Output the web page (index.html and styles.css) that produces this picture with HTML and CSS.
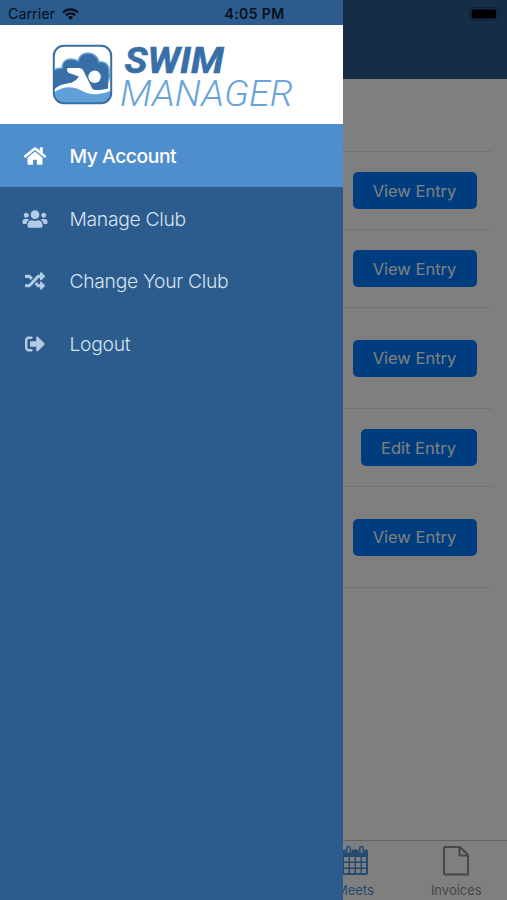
FILE: index.html
```html
<!DOCTYPE html>
<html lang="en">
<head>
  <meta charset="UTF-8" />
  <title>Swim Manager</title>
  <meta name="viewport" content="width=device-width, initial-scale=1.0" />
  <link rel="stylesheet" href="styles.css">
</head>
<body>

  <div class="page">
    <header class="navbar"></header>

    <main class="entries">
      <div class="entry entry-head"></div>
      <div class="entry"><button class="btn">View Entry</button></div>
      <div class="entry"><button class="btn">View Entry</button></div>
      <div class="entry entry-tall"><button class="btn">View Entry</button></div>
      <div class="entry"><button class="btn btn-edit">Edit Entry</button></div>
      <div class="entry entry-tall"><button class="btn">View Entry</button></div>
    </main>

    <nav class="tabbar">
      <a class="tab active">
        <svg viewBox="0 0 28 32">
          <path fill="currentColor" fill-rule="evenodd" d="M3 4.500h1.500V7a3.500 3.500 0 0 0 6 0V4.500h7V7a3.500 3.500 0 0 0 6 0V4.500H25a2 2 0 0 1 2 2V28a2 2 0 0 1-2 2H3a2 2 0 0 1-2-2V6.500a2 2 0 0 1 2-2zM3 12v4.500h4.500V12zM9 12v4.500h4.500V12zM15 12v4.500h4.500V12zM21 12v4.500h4V12zM3 18v4.500h4.500V18zM9 18v4.500h4.500V18zM15 18v4.500h4.500V18zM21 18v4.500h4V18zM3 24v4h4.500v-4zM9 24v4h4.500v-4zM15 24v4h4.500v-4zM21 24v4h4v-4z"/>
          <path fill="none" stroke="currentColor" stroke-width="1.500" d="M5.800 3.200a1.700 1.700 0 0 1 3.400 0V7a1.700 1.700 0 0 1-3.400 0zM18.800 3.200a1.700 1.700 0 0 1 3.400 0V7a1.700 1.700 0 0 1-3.400 0z"/>
        </svg>
        <span>Meets</span>
      </a>
      <a class="tab">
        <svg viewBox="0 0 28 32">
          <path fill="none" stroke="currentColor" stroke-width="2" stroke-linejoin="round" d="M3.500 2H18l8 8v19.500H3a1 1 0 0 1-1-1V3a1 1 0 0 1 1-1zM17.500 2v8.500H26"/>
        </svg>
        <span>Invoices</span>
      </a>
    </nav>
  </div>

  <div class="overlay"></div>

  <aside class="drawer">
    <div class="logo">
      <svg viewBox="0 0 343 99">
        <defs>
          <clipPath id="badge"><rect x="54" y="21" width="57" height="57" rx="9"/></clipPath>
        </defs>
        <g clip-path="url(#badge)">
          <path class="logo-cloud" d="M52 47c2-3 6-4 10-4 0-6 4-9 9-9q4 0 7 2c1-5 5-8 10-8 6 0 10 4 11 9 7-1 11 4 10 10 1 4 0 8-1 11v12H52z"/>
          <path class="logo-rim" d="M52 47c2-3 6-4 10-4 0-6 4-9 9-9q4 0 7 2c1-5 5-8 10-8 6 0 10 4 11 9 7-1 11 4 10 10 1 4 0 8-1 11"/>
          <path class="logo-white" d="M52 67c3-4 7-7 13-8l7-1.500q4-1.500 7-6L69 48q-3-2-1.500-5H79q2.500 0 4 2l9.500 19c3 2 10 1 19-1.500V72H52z"/>
          <circle class="logo-white" cx="94.600" cy="51.800" r="6.200"/>
          <path class="logo-wave" d="M52 69c10-8 20-8 28-4 11 6 20 5 33 0v15H52z"/>
        </g>
        <rect class="logo-frame" x="53.800" y="20.800" width="57.400" height="57.400" rx="10"/>
        <text class="logo-swim" x="124.500" y="47.500" textLength="99" lengthAdjust="spacingAndGlyphs">SWIM</text>
        <text class="logo-manager" x="120" y="80.500" textLength="173" lengthAdjust="spacingAndGlyphs">MANAGER</text>
      </svg>
    </div>

    <nav class="menu">
      <a class="menu-item active">
        <svg viewBox="0 0 576 512"><path d="M280.370 148.260L96 300.110V464a16 16 0 0 0 16 16l112.060-.290a16 16 0 0 0 15.920-16V368a16 16 0 0 1 16-16h64a16 16 0 0 1 16 16v95.640a16 16 0 0 0 16 16.050L464 480a16 16 0 0 0 16-16V300L295.670 148.260a12.190 12.190 0 0 0-15.300 0zM571.600 251.470L488 182.560V44.050a12 12 0 0 0-12-12h-56a12 12 0 0 0-12 12v72.610L318.470 43a48 48 0 0 0-61 0L4.340 251.470a12 12 0 0 0-1.600 16.900l25.500 31A12 12 0 0 0 45.150 301l235.220-193.740a12.190 12.190 0 0 1 15.300 0L530.900 301a12 12 0 0 0 16.900-1.600l25.500-31a12 12 0 0 0-1.700-16.930z"/></svg>
        <span>My Account</span>
      </a>
      <a class="menu-item">
        <svg viewBox="0 0 640 512"><path d="M96 224c35.300 0 64-28.700 64-64s-28.700-64-64-64-64 28.700-64 64 28.700 64 64 64zm448 0c35.300 0 64-28.700 64-64s-28.700-64-64-64-64 28.700-64 64 28.700 64 64 64zm32 32h-64c-17.600 0-33.500 7.100-45.100 18.600 40.300 22.100 68.900 62 75.100 109.400h66c17.700 0 32-14.300 32-32v-32c0-35.300-28.700-64-64-64zm-256 0c61.900 0 112-50.100 112-112S381.900 32 320 32 208 82.100 208 144s50.100 112 112 112zm76.800 32h-8.300c-20.800 10-43.900 16-68.500 16s-47.600-6-68.500-16h-8.300C179.600 288 128 339.600 128 403.200V432c0 26.500 21.500 48 48 48h288c26.500 0 48-21.500 48-48v-28.800c0-63.600-51.600-115.200-115.200-115.200zm-223.700-13.400C161.500 263.100 145.600 256 128 256H64c-35.300 0-64 28.700-64 64v32c0 17.700 14.300 32 32 32h65.900c6.300-47.400 34.900-87.300 75.200-109.400z"/></svg>
        <span>Manage Club</span>
      </a>
      <a class="menu-item">
        <svg viewBox="0 0 512 512"><path d="M504.971 359.029c9.373 9.373 9.373 24.569 0 33.941l-80 79.984c-15.010 15.010-40.971 4.490-40.971-16.971V416h-58.785a12.004 12.004 0 0 1-8.773-3.812l-70.556-75.596 53.333-57.143L352 336h32v-39.981c0-21.438 25.943-31.998 40.971-16.971l80 79.981zM12 176h84l52.781 56.551 53.333-57.143-70.556-75.596A11.999 11.999 0 0 0 122.785 96H12c-6.627 0-12 5.373-12 12v56c0 6.627 5.373 12 12 12zm372 0v39.984c0 21.460 25.961 31.980 40.971 16.971l80-79.984c9.373-9.373 9.373-24.569 0-33.941l-80-79.981C409.943 24.021 384 34.582 384 56.019V96h-58.785a12.004 12.004 0 0 0-8.773 3.812L96 336H12c-6.627 0-12 5.373-12 12v56c0 6.627 5.373 12 12 12h110.785c3.326 0 6.503-1.381 8.773-3.812L352 176h32z"/></svg>
        <span>Change Your Club</span>
      </a>
      <a class="menu-item">
        <svg viewBox="0 0 512 512"><path d="M497 273L329 441c-15 15-41 4.500-41-17v-96H152c-13.300 0-24-10.700-24-24v-96c0-13.300 10.700-24 24-24h136V88c0-21.400 25.900-32 41-17l168 168c9.300 9.400 9.300 24.600 0 34zM192 436v-40c0-6.600-5.400-12-12-12H96c-17.700 0-32-14.300-32-32V160c0-17.700 14.300-32 32-32h84c6.600 0 12-5.400 12-12V76c0-6.600-5.400-12-12-12H96c-53 0-96 43-96 96v192c0 53 43 96 96 96h84c6.600 0 12-5.400 12-12z"/></svg>
        <span>Logout</span>
      </a>
    </nav>
  </aside>

  <div class="statusbar">
    <div class="carrier">
      <span>Carrier</span>
      <svg viewBox="0 0 17 12">
        <g fill="none" stroke="currentColor" stroke-width="2.300">
          <path d="M1 4.500a10.700 10.700 0 0 1 15 0"/>
          <path d="M3.800 7.400a6.700 6.700 0 0 1 9.400 0"/>
        </g>
        <path fill="currentColor" d="M8.500 12L5.800 9.300a3.800 3.800 0 0 1 5.400 0z"/>
      </svg>
    </div>
    <div class="time">4:05 PM</div>
    <div class="battery">
      <svg viewBox="0 0 32 14">
        <rect x=".5" y=".5" width="28" height="12.500" rx="3.500" fill="none" stroke="#0f2033"/>
        <rect x="2.500" y="2.500" width="24.500" height="8.800" rx="1.500" fill="#000"/>
        <path d="M30 4.500q2 2.200 0 4.500z" fill="#0f2033"/>
      </svg>
    </div>
  </div>

</body>
</html>
```

FILE: styles.css
```css
* {
  box-sizing: border-box;
}

body {
  margin: 0;
  height: 900px;
  overflow: hidden;
  position: relative;
  font-family: Inter, 'Liberation Sans', sans-serif;
  background: #fff;
}

.page {
  height: 900px;
  display: flex;
  flex-direction: column;
}

.navbar {
  height: 79px;
  background: #2c5a8c;
}

.entries {
  flex: 1;
  padding: 0 15px;
}

.entry {
  height: 78px;
  padding-right: 15.5px;
  border-bottom: 1px solid #e6e9ec;
  display: flex;
  align-items: center;
  justify-content: flex-end;
}

.entry-head {
  height: 73px;
}

.entry-tall {
  height: 101px;
}

.btn {
  width: 124px;
  height: 37px;
  padding: 0;
  border: none;
  border-radius: 5px;
  background: #007bff;
  color: #fff;
  font-family: inherit;
  font-size: 16.5px;
}

.btn-edit {
  width: 116px;
}

.tabbar {
  height: 60px;
  border-top: 1px solid #c4c4c4;
  display: flex;
  justify-content: flex-end;
}

.tab {
  width: 101.4px;
  padding-top: 4px;
  display: flex;
  flex-direction: column;
  align-items: center;
  gap: 4px;
  color: #8e8e93;
  font-size: 13px;
  line-height: 18px;
}

.tab.active {
  color: #4a94e0;
}

.tab svg {
  width: 28px;
  height: 32px;
}

.overlay {
  position: absolute;
  inset: 0;
  background: rgba(0, 0, 0, 0.5);
}

.drawer {
  position: absolute;
  top: 0;
  left: 0;
  width: 343px;
  height: 900px;
  padding-top: 25px;
  background: #2c5b8d;
}

.logo {
  height: 99px;
  background: #fff;
}

.logo svg {
  display: block;
  width: 343px;
  height: 99px;
}

.logo-cloud {
  fill: #376fa6;
}

.logo-rim {
  fill: none;
  stroke: #73a7d8;
  stroke-width: 1.5;
}

.logo-white {
  fill: #fff;
}

.logo-wave {
  fill: #609fd7;
}

.logo-frame {
  fill: none;
  stroke: #376fa6;
  stroke-width: 2;
}

.logo-swim {
  font: italic 700 37px Roboto, sans-serif;
  fill: #376fa6;
  stroke: #376fa6;
  stroke-width: 0.6;
}

.logo-manager {
  font: italic 300 37px Roboto, sans-serif;
  fill: #68a4da;
}

.menu-item {
  height: 62.7px;
  padding: 1px 0 0 22px;
  display: flex;
  align-items: center;
  gap: 21.5px;
  color: #d5e2f0;
  font-size: 19.3px;
  font-weight: 300;
  letter-spacing: -0.3px;
}

.menu-item svg {
  width: 26px;
  height: 20px;
  fill: #b3cbe4;
}

.menu-item.active {
  background: #4f8ecd;
  color: #fff;
  font-weight: 500;
  letter-spacing: -0.45px;
}

.menu-item.active svg {
  fill: #fff;
}

.statusbar {
  position: absolute;
  top: 0;
  left: 0;
  width: 100%;
  height: 27px;
  padding: 0 6px 0 8px;
  display: grid;
  grid-template-columns: 1fr auto 1fr;
  align-items: center;
  color: #06101c;
  font-size: 14.3px;
}

.carrier {
  display: flex;
  align-items: center;
  gap: 7px;
}

.carrier svg {
  width: 17px;
  height: 12px;
}

.time {
  font-weight: 600;
  font-size: 14px;
  letter-spacing: 0.4px;
}

.battery {
  display: flex;
  justify-content: flex-end;
}

.battery svg {
  width: 32px;
  height: 14px;
}
```
